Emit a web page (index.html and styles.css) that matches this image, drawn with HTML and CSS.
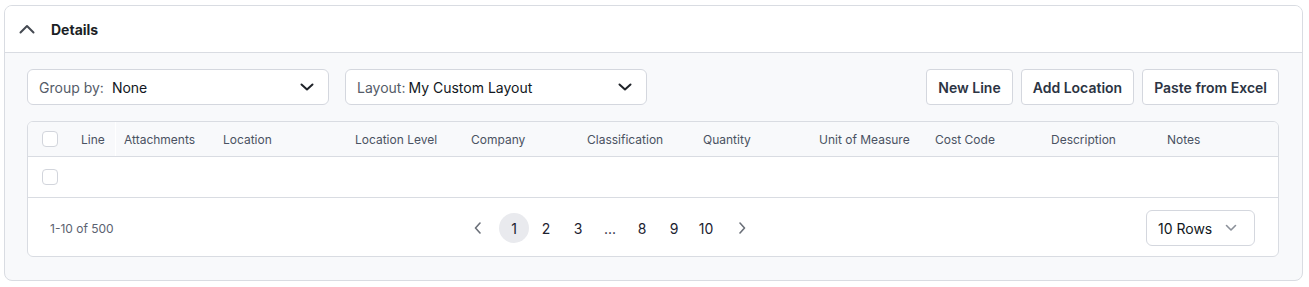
FILE: index.html
```html
<!DOCTYPE html>
<html lang="en">
    <head>
        <meta charset="UTF-8" />
        <meta name="viewport" content="width=device-width, initial-scale=1.0" />
        <title>Details</title>
        <link rel="stylesheet" href="styles.css">
    </head>
    <body>
        <section class="card">
            <header class="card-head">
                <svg class="collapse" width="16" height="10" viewBox="0 0 16 10">
                    <path d="M1.5 8.5 L8 2 L14.5 8.5" fill="none" stroke="#454a52" stroke-width="2" stroke-linecap="round" stroke-linejoin="round" />
                </svg>
                <h2>Details</h2>
            </header>
            <div class="card-body">
                <div class="toolbar">
                    <div class="select">
                        <span class="label label-group">Group by:</span>
                        <span class="value">None</span>
                        <svg class="caret" width="14" height="8" viewBox="0 0 14 8">
                            <path d="M1.5 1.5 L7 6.5 L12.5 1.5" fill="none" stroke="#1f2329" stroke-width="2" stroke-linecap="round" stroke-linejoin="round" />
                        </svg>
                    </div>
                    <div class="select">
                        <span class="label">Layout:</span>
                        <span class="value">My Custom Layout</span>
                        <svg class="caret" width="14" height="8" viewBox="0 0 14 8">
                            <path d="M1.5 1.5 L7 6.5 L12.5 1.5" fill="none" stroke="#1f2329" stroke-width="2" stroke-linecap="round" stroke-linejoin="round" />
                        </svg>
                    </div>
                    <div class="actions">
                        <button class="btn">New Line</button>
                        <button class="btn">Add Location</button>
                        <button class="btn">Paste from Excel</button>
                    </div>
                </div>

                <div class="table">
                    <div class="row head">
                        <div class="cell check"><span class="box"></span></div>
                        <div class="cell divider">Line</div>
                        <div class="cell">Attachments</div>
                        <div class="cell">Location</div>
                        <div class="cell">Location Level</div>
                        <div class="cell">Company</div>
                        <div class="cell">Classification</div>
                        <div class="cell">Quantity</div>
                        <div class="cell">Unit of Measure</div>
                        <div class="cell">Cost Code</div>
                        <div class="cell">Description</div>
                        <div class="cell">Notes</div>
                    </div>
                    <div class="row line">
                        <div class="cell check"><span class="box"></span></div>
                    </div>
                    <div class="foot">
                        <span class="count">1-10 of 500</span>
                        <nav class="pager">
                            <button class="page arrow">
                                <svg width="8" height="12" viewBox="0 0 8 12"><path d="M6 1 L1.5 6 L6 11" fill="none" stroke="#6b7079" stroke-width="1.6" stroke-linecap="round" stroke-linejoin="round" /></svg>
                            </button>
                            <button class="page current">1</button>
                            <button class="page">2</button>
                            <button class="page">3</button>
                            <span class="page">...</span>
                            <button class="page">8</button>
                            <button class="page">9</button>
                            <button class="page">10</button>
                            <button class="page arrow">
                                <svg width="8" height="12" viewBox="0 0 8 12"><path d="M2 1 L6.5 6 L2 11" fill="none" stroke="#6b7079" stroke-width="1.6" stroke-linecap="round" stroke-linejoin="round" /></svg>
                            </button>
                        </nav>
                        <div class="rows">
                            <span>10 Rows</span>
                            <svg width="12" height="8" viewBox="0 0 12 8"><path d="M1.5 1.5 L6 6 L10.5 1.5" fill="none" stroke="#8b9099" stroke-width="1.6" stroke-linecap="round" stroke-linejoin="round" /></svg>
                        </div>
                    </div>
                </div>
            </div>
        </section>
    </body>
</html>
```

FILE: styles.css
```css
* {
    box-sizing: border-box;
    margin: 0;
    padding: 0;
    font-family: Inter, "Noto Sans", sans-serif;
}
body {
    background: #ffffff;
    padding: 5px 6px 7px 4px;
}
.card {
    border: 1px solid #d9dce2;
    border-radius: 8px;
    background: #f8f9fb;
    overflow: hidden;
}
.card-head {
    display: flex;
    align-items: center;
    gap: 16px;
    height: 47px;
    padding: 0 14px;
    background: #ffffff;
    border-bottom: 1px solid #d9dce2;
}
.card-head h2 {
    font-size: 14px;
    font-weight: 700;
    color: #1b1f26;
}
.card-body {
    padding: 16px 23px 23px 22px;
}
.toolbar {
    display: flex;
    gap: 16px;
    height: 36px;
    margin-bottom: 16px;
}
.select {
    display: flex;
    align-items: center;
    width: 302px;
    padding: 0 14px 0 11px;
    background: #ffffff;
    border: 1px solid #d4d7de;
    border-radius: 6px;
    font-size: 14px;
}
.label {
    color: #555c68;
    margin-right: 3px;
}
.label-group {
    margin-right: 8px;
}
.value {
    color: #111722;
    flex: 1;
}
.actions {
    display: flex;
    gap: 8px;
    margin-left: auto;
}
.btn {
    height: 36px;
    padding: 0 11px;
    background: #ffffff;
    border: 1px solid #d4d7de;
    border-radius: 4px;
    font-size: 14px;
    font-weight: 600;
    color: #2c3443;
}
.table {
    background: #ffffff;
    border: 1px solid #d9dce2;
    border-radius: 6px;
    overflow: hidden;
}
.row {
    display: grid;
    grid-template-columns: 45px 43px 99px 132px repeat(7, 116px) 1fr;
    align-items: center;
    border-bottom: 1px solid #d9dce2;
}
.head {
    height: 35px;
    background: #f8f9fb;
}
.line {
    height: 41px;
}
.cell {
    padding-left: 8px;
    font-size: 12px;
    color: #4a5262;
    white-space: nowrap;
}
.head .divider {
    align-self: stretch;
    display: flex;
    align-items: center;
    border-right: 1px solid #ffffff;
}
.check {
    display: flex;
    padding-left: 14px;
}
.box {
    width: 16px;
    height: 16px;
    background: #ffffff;
    border: 1px solid #d2d5dc;
    border-radius: 4px;
}
.foot {
    display: grid;
    grid-template-columns: 409px auto 1fr;
    align-items: center;
    height: 58px;
    padding: 2px 23px 0 22px;
}
.count {
    font-size: 12px;
    color: #5b6270;
}
.pager {
    display: flex;
    align-items: center;
    gap: 2px;
}
.page {
    display: flex;
    align-items: center;
    justify-content: center;
    width: 30px;
    height: 30px;
    border: none;
    border-radius: 50%;
    background: none;
    font-size: 14px;
    color: #1c2230;
}
.arrow {
    margin: 0 4px;
}
.current {
    background: #e9eaee;
}
.rows {
    justify-self: end;
    display: flex;
    align-items: center;
    justify-content: space-between;
    width: 109px;
    height: 36px;
    padding: 0 17px 0 11px;
    border: 1px solid #d4d7de;
    border-radius: 6px;
    font-size: 14px;
    color: #111722;
}
```
